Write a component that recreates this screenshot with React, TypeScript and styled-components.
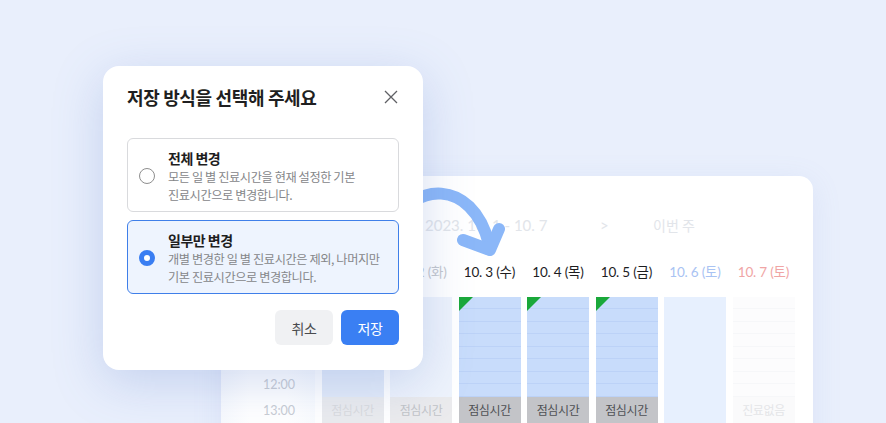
import styled, { createGlobalStyle } from "styled-components";

const GlobalStyle = createGlobalStyle`
  html, body {
    margin: 0;
    padding: 0;
  }
  body {
    font-family: "Noto Sans CJK KR", "Noto Sans", sans-serif;
    background: #e9effc;
  }
`;

const Page = styled.div`
  position: relative;
  width: 886px;
  height: 423px;
  overflow: hidden;
  background: #e9effc;
  padding: 176px 0 0 221px;
  box-sizing: border-box;
`;

const CalendarCard = styled.div`
  width: 592px;
  height: 320px;
  background: #ffffff;
  border-radius: 14px;
  box-shadow: 0 6px 30px rgba(120, 150, 210, 0.12);
  display: flex;
  flex-direction: column;
`;

const WeekBar = styled.div`
  height: 86px;
  display: flex;
  align-items: flex-start;
  padding: 40px 0 0 180px;
  color: #e2e5ea;
  font-size: 15px;
  line-height: 18px;
  font-family: "Lato", "Noto Sans CJK KR", sans-serif;
  box-sizing: border-box;
  & > span:nth-child(1) {
    width: 24px;
  }
  & > span:nth-child(2) {
    width: 175px;
  }
  & > span:nth-child(3) {
    width: 53px;
  }
`;

const WeekLabel = styled.span`
  font-family: "Noto Sans CJK KR", sans-serif;
  font-size: 14px;
`;

const Grid = styled.div`
  display: grid;
  grid-template-columns: 94px repeat(7, 62px);
  column-gap: 6.5px;
`;

const DayLabel = styled.div<{ $tone: string }>`
  height: 35px;
  text-align: center;
  font-family: "Lato", "Noto Sans CJK KR", sans-serif;
  font-size: 13.5px;
  line-height: 20px;
  color: ${(p) => p.$tone};
  white-space: nowrap;
  letter-spacing: -0.2px;
`;

const TimeColumn = styled.div`
  display: flex;
  flex-direction: column;
  justify-content: flex-end;
  height: 126px;
  background: linear-gradient(90deg, #f7f9fd 0%, #ffffff 30%, #ffffff 70%, #f9fbfe 100%);
`;

const TimeLabel = styled.div`
  height: 25.5px;
  line-height: 25.5px;
  text-align: center;
  padding-left: 22px;
  font-family: "Lato", sans-serif;
  font-size: 12.5px;
  color: #c8ccd3;
`;

const DayColumn = styled.div<{ $bg: string; $lines?: string; $fade?: number }>`
  position: relative;
  height: 126px;
  display: flex;
  flex-direction: column;
  opacity: ${(p) => p.$fade ?? 1};
  background: ${(p) =>
    p.$lines
      ? `repeating-linear-gradient(180deg, ${p.$bg} 0px, ${p.$bg} 11.5px, ${p.$lines} 11.5px, ${p.$lines} 12.5px)`
      : p.$bg};
`;

const Slots = styled.div`
  flex: 1;
`;

const Lunch = styled.div<{ $bg: string; $fg: string }>`
  height: 26px;
  line-height: 26px;
  text-align: center;
  font-size: 12px;
  background: ${(p) => p.$bg};
  color: ${(p) => p.$fg};
  letter-spacing: -0.4px;
`;

const Corner = styled.div`
  position: absolute;
  top: 0;
  left: 0;
  width: 0;
  height: 0;
  border-top: 14px solid #1aa83a;
  border-right: 14px solid transparent;
`;

const Dialog = styled.div`
  position: absolute;
  left: 103px;
  top: 66px;
  width: 320px;
  height: 304px;
  box-sizing: border-box;
  background: #ffffff;
  border-radius: 16px;
  padding: 18px 24px 25px 24px;
  box-shadow: 0 12px 50px rgba(90, 125, 200, 0.26);
  display: flex;
  flex-direction: column;
`;

const DialogHeader = styled.div`
  display: flex;
  align-items: center;
  justify-content: space-between;
  height: 26px;
  margin-bottom: 28px;
`;

const Title = styled.h2`
  margin: 0;
  font-size: 18px;
  font-weight: 700;
  color: #1f1f21;
  letter-spacing: -0.35px;
`;

const CloseButton = styled.button`
  border: 0;
  background: none;
  padding: 0;
  margin-right: 1px;
  width: 14px;
  height: 14px;
  display: flex;
`;

const Options = styled.div`
  display: flex;
  flex-direction: column;
  gap: 8px;
`;

const Option = styled.div<{ $active?: boolean }>`
  display: flex;
  align-items: center;
  gap: 13px;
  padding: 9px 10px 7px 11px;
  border-radius: 6px;
  border: 1px solid ${(p) => (p.$active ? "#3f7fe9" : "#d9dadd")};
  background: ${(p) => (p.$active ? "#eef4fe" : "#ffffff")};
`;

const Radio = styled.span<{ $checked?: boolean }>`
  flex: none;
  width: 16px;
  height: 16px;
  box-sizing: border-box;
  border-radius: 50%;
  background: #ffffff;
  border: ${(p) => (p.$checked ? "5px solid #3a7ef2" : "1.3px solid #8e8e8e")};
`;

const OptionText = styled.div`
  display: flex;
  flex-direction: column;
`;

const OptionTitle = styled.div`
  font-size: 14px;
  font-weight: 700;
  line-height: 20px;
  color: #1e1e1e;
  letter-spacing: -0.5px;
`;

const OptionDesc = styled.div`
  font-size: 12.2px;
  line-height: 18px;
  color: #858689;
  letter-spacing: -0.4px;
`;

const Actions = styled.div`
  margin-top: auto;
  display: flex;
  justify-content: flex-end;
  gap: 8px;
`;

const ActionButton = styled.button<{ $primary?: boolean }>`
  width: 58px;
  height: 35px;
  border: 0;
  border-radius: 6px;
  font-family: "Noto Sans CJK KR", sans-serif;
  font-size: 14px;
  letter-spacing: -0.3px;
  background: ${(p) => (p.$primary ? "#3a7ff3" : "#f0f1f3")};
  color: ${(p) => (p.$primary ? "#ffffff" : "#4a4b4e")};
`;

const Arrow = styled.svg`
  position: absolute;
  left: 0;
  top: 0;
  pointer-events: none;
`;

type Day = {
  label: string;
  tone: string;
  bg: string;
  lines?: string;
  lunch?: { bg: string; fg: string; text: string };
  corner?: boolean;
  fade?: number;
};

// the Monday label sits fully under the dialog, so it is left blank
const days: Day[] = [
  {
    label: "",
    tone: "#c7c9ce",
    bg: "#dde7f8",
    lunch: { bg: "#e6e7ea", fg: "#d0d2d6", text: "점심시간" },
    fade: 0.8,
  },
  {
    label: "10. 2 (화)",
    tone: "#c4c7cc",
    bg: "#eef3fc",
    lunch: { bg: "#ebebed", fg: "#c2c4c8", text: "점심시간" },
  },
  {
    label: "10. 3 (수)",
    tone: "#1d1d1f",
    bg: "#c8dcfb",
    lines: "#bcd2f7",
    lunch: { bg: "#c3c4c8", fg: "#4f5155", text: "점심시간" },
    corner: true,
  },
  {
    label: "10. 4 (목)",
    tone: "#1d1d1f",
    bg: "#c8dcfb",
    lines: "#bcd2f7",
    lunch: { bg: "#c3c4c8", fg: "#4f5155", text: "점심시간" },
    corner: true,
  },
  {
    label: "10. 5 (금)",
    tone: "#1d1d1f",
    bg: "#c8dcfb",
    lines: "#bcd2f7",
    lunch: { bg: "#c3c4c8", fg: "#4f5155", text: "점심시간" },
    corner: true,
  },
  {
    label: "10. 6 (토)",
    tone: "#a9c3f3",
    bg: "#e7f0fe",
  },
  {
    label: "10. 7 (토)",
    tone: "#f0a5a5",
    bg: "#fcfcfd",
    lines: "#f6f7f9",
    lunch: { bg: "#fafafb", fg: "#e4e5e8", text: "진료없음" },
  },
];

export default function App() {
  return (
    <>
      <GlobalStyle />
      <Page>
        <CalendarCard>
          <WeekBar>
            <span>&lt;</span>
            <span>2023. 10. 1 - 10. 7</span>
            <span>&gt;</span>
            <WeekLabel>이번 주</WeekLabel>
          </WeekBar>
          <Grid>
            <div />
            {days.map((d, i) => (
              <DayLabel key={"label-" + i} $tone={d.tone}>
                {d.label}
              </DayLabel>
            ))}
            <TimeColumn>
              <TimeLabel>12:00</TimeLabel>
              <TimeLabel>13:00</TimeLabel>
            </TimeColumn>
            {days.map((d, i) => (
              <DayColumn key={"col-" + i} $bg={d.bg} $lines={d.lines} $fade={d.fade}>
                <Slots />
                {d.lunch && (
                  <Lunch $bg={d.lunch.bg} $fg={d.lunch.fg}>
                    {d.lunch.text}
                  </Lunch>
                )}
                {d.corner && <Corner />}
              </DayColumn>
            ))}
          </Grid>
        </CalendarCard>

        <Arrow width="886" height="423" viewBox="0 0 886 423">
          <path
            d="M 396 225 C 410 184, 472 176, 489 244"
            fill="none"
            stroke="#8bb7f8"
            strokeWidth="12"
            strokeLinecap="round"
          />
          <path
            d="M 463 240 L 490 250 L 499 229"
            fill="none"
            stroke="#8bb7f8"
            strokeWidth="12"
            strokeLinecap="round"
            strokeLinejoin="round"
          />
        </Arrow>

        <Dialog>
          <DialogHeader>
            <Title>저장 방식을 선택해 주세요</Title>
            <CloseButton aria-label="닫기">
              <svg width="14" height="14" viewBox="0 0 14 14">
                <path d="M1 1 L13 13 M13 1 L1 13" stroke="#5f6064" strokeWidth="1.3" fill="none" />
              </svg>
            </CloseButton>
          </DialogHeader>
          <Options>
            <Option>
              <Radio />
              <OptionText>
                <OptionTitle>전체 변경</OptionTitle>
                <OptionDesc>
                  모든 일 별 진료시간을 현재 설정한 기본
                  <br />
                  진료시간으로 변경합니다.
                </OptionDesc>
              </OptionText>
            </Option>
            <Option $active>
              <Radio $checked />
              <OptionText>
                <OptionTitle>일부만 변경</OptionTitle>
                <OptionDesc>
                  개별 변경한 일 별 진료시간은 제외, 나머지만
                  <br />
                  기본 진료시간으로 변경합니다.
                </OptionDesc>
              </OptionText>
            </Option>
          </Options>
          <Actions>
            <ActionButton>취소</ActionButton>
            <ActionButton $primary>저장</ActionButton>
          </Actions>
        </Dialog>
      </Page>
    </>
  );
}
